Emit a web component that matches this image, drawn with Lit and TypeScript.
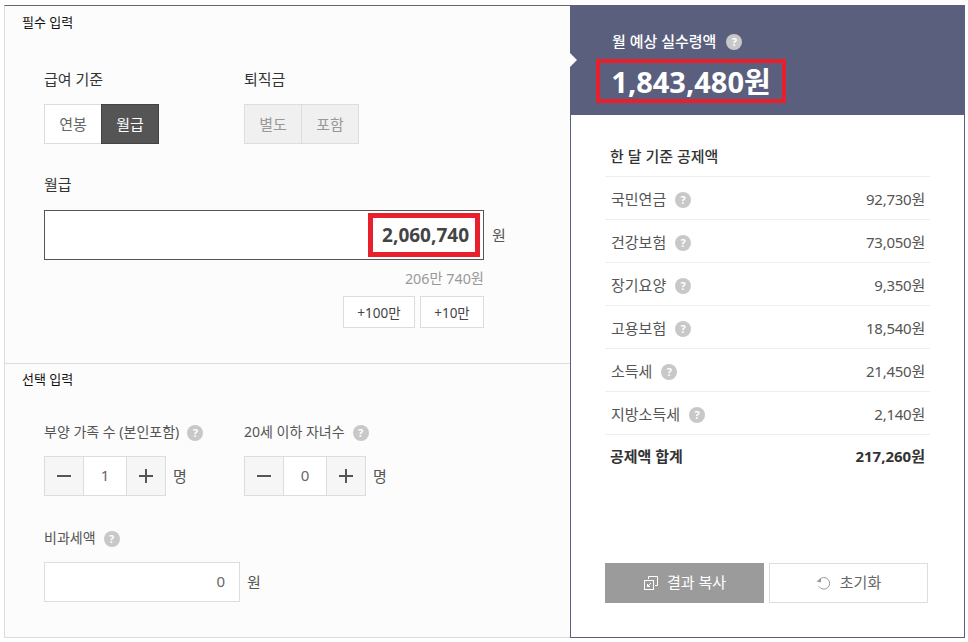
import { LitElement, html, css } from "lit";
import { customElement } from "lit/decorators.js";

const help = () => html`<span class="help">?</span>`;
const rows: [string, string][] = [
  ["국민연금", "92,730원"],
  ["건강보험", "73,050원"],
  ["장기요양", "9,350원"],
  ["고용보험", "18,540원"],
  ["소득세", "21,450원"],
  ["지방소득세", "2,140원"],
];

@customElement("app-root")
export class AppRoot extends LitElement {
  static styles = css`
    :host {
      display: block;
      width: 968px;
      height: 642px;
      box-sizing: border-box;
      padding: 5px 3px 4px 4px;
      background: #fff;
      font-family: "Noto Sans", "Noto Sans CJK KR", sans-serif;
      font-size: 15px;
      color: #444;
    }
    * { box-sizing: border-box; }
    .wrap { display: flex; height: 633px; }
    .left {
      width: 566px;
      display: flex;
      flex-direction: column;
      background: #fcfcfc;
      border-top: 1px solid #666;
      border-left: 1px solid #ddd;
      border-bottom: 1px solid #ddd;
    }
    .sec1 { height: 358px; border-bottom: 1px solid #ddd; flex: none; }
    .sec2 { flex: 1; }
    .title { font-size: 13px; color: #111; line-height: 18px; padding: 7px 0 0 17px; height: 25px; }
    .sec2 .title { padding-top: 6px; }
    .lbl { font-size: 15px; line-height: 20px; color: #333; display: flex; align-items: center; }
    .sec2 .lbl { color: #555; font-size: 14px; }
    .help {
      display: inline-flex;
      align-items: center;
      justify-content: center;
      width: 16px;
      height: 16px;
      margin-top: 2px;
      border-radius: 50%;
      background: #c8c8c8;
      color: #fff;
      font-size: 11px;
      font-weight: 700;
      margin-left: 8px;
      flex: none;
    }
    .cols { display: flex; padding: 38px 0 0 39px; }
    .cols > div { width: 200px; }
    .seg { display: flex; margin-top: 15px; }
    .seg span {
      width: 58px;
      height: 40px;
      display: flex;
      align-items: center;
      justify-content: center;
      padding-bottom: 1px;
      border: 1px solid #ddd;
      background: #fff;
      color: #666;
    }
    .seg span + span { margin-left: -1px; }
    .seg span.on { background: #555; border-color: #444; color: #fff; }
    .seg.dis span { background: #f0f0f0; color: #999; }
    .salary { padding: 30px 0 0 39px; }
    .inrow { display: flex; align-items: center; margin-top: 16px; width: 480px; }
    .bigin {
      width: 440px;
      height: 50px;
      border: 1px solid #555;
      background: #fff;
      display: flex;
      justify-content: flex-end;
      align-items: center;
      padding: 0 3px 0 0;
    }
    .redn {
      width: 112px;
      height: 44px;
      border: 5px solid #e8202c;
      display: flex;
      align-items: center;
      justify-content: flex-end;
      padding-right: 6px;
      font-size: 19px;
      font-weight: 700;
      color: #444;
    }
    .unit { margin-left: 8px; padding-bottom: 1px; color: #555; font-size: 15px; }
    .stepwrap .unit { margin-left: 7px; }
    .hint { width: 440px; text-align: right; font-size: 14.3px; color: #999; margin-top: 9px; line-height: 20px; }
    .adds { width: 440px; display: flex; justify-content: flex-end; gap: 5px; margin-top: 7px; }
    .adds span {
      height: 32px;
      border: 1px solid #ddd;
      background: #fff;
      display: flex;
      align-items: center;
      justify-content: center;
      padding-bottom: 1px;
      font-size: 13.5px;
      color: #444;
    }
    .adds .a { width: 72px; }
    .adds .b { width: 64px; }
    .sec2 .cols { padding-top: 33px; }
    .stepwrap { display: flex; align-items: center; margin-top: 14px; }
    .step { display: flex; width: 122px; height: 40px; border: 1px solid #ddd; background: #fff; }
    .step i { width: 38px; background: #f6f6f6; display: flex; align-items: center; justify-content: center; }
    .step b { flex: 1; border-left: 1px solid #ddd; border-right: 1px solid #ddd; display: flex; align-items: center; justify-content: center; padding-bottom: 2px; font-weight: 400; color: #666; }
    .step svg { width: 16px; height: 16px; display: block; }
    .nontax { padding: 32px 0 0 39px; }
    .smallin {
      width: 196px;
      height: 40px;
      border: 1px solid #ddd;
      background: #fff;
      display: flex;
      align-items: center;
      justify-content: flex-end;
      padding: 0 14px 2px 0;
      color: #666;
    }
    .nontax .unit { margin-left: 7px; }
    .nontax .inrow { margin-top: 14px; }

    .right {
      flex: 1;
      display: flex;
      flex-direction: column;
      background: #fff;
      border-left: 1px solid #5b5f7e;
      border-right: 1px solid #5b5f7e;
      border-bottom: 1px solid #5b5f7e;
    }
    .head { position: relative; height: 110px; background: #5b5f7e; color: #fff; padding: 26px 0 0 25px; flex: none; }
    .head::before {
      content: "";
      position: absolute;
      left: -1px;
      top: 48px;
      border-left: 7px solid #fcfcfc;
      border-top: 7px solid transparent;
      border-bottom: 7px solid transparent;
    }
    .ht { display: flex; align-items: center; font-size: 15px; font-weight: 500; line-height: 20px; margin-left: 16px; }
    .ht .help { margin-left: 10px; }
    .amount {
      width: 190px;
      height: 44px;
      margin-top: 8px;
      border: 4px solid #e8202c;
      display: flex;
      align-items: center;
      justify-content: center;
      padding-bottom: 3px;
      font-size: 29px;
      font-weight: 700;
      letter-spacing: 0;
      white-space: nowrap;
    }
    .body { flex: 1; padding: 30px 0 0 34px; display: flex; flex-direction: column; }
    .bt { font-size: 15px; font-weight: 500; color: #333; line-height: 22px; margin-left: 5px; height: 31px; }
    .row {
      width: 325px;
      height: 43px;
      border-top: 1px solid #eee;
      display: flex;
      align-items: center;
      justify-content: space-between;
      padding: 1px 5px 0 6px;
      color: #555;
    }
    .row .n { display: flex; align-items: center; }
    .row .help { margin-left: 9px; }
    .row .v { letter-spacing: -0.25px; }
    .row.total { color: #333; font-weight: 700; padding: 0 5px 1px 5px; }
    .btns { display: flex; gap: 5px; margin-top: auto; margin-bottom: 34px; }
    .btn {
      width: 159px;
      height: 40px;
      display: flex;
      align-items: center;
      justify-content: center;
      gap: 8px;
      padding-bottom: 3px;
    }
    .btn svg { width: 16px; height: 16px; display: block; margin-top: 3px; }
    .btn.copy { background: #9b9b9b; color: #fff; }
    .btn.reset { border: 1px solid #ddd; color: #666; background: #fff; }
  `;

  minus() {
    return html`<svg viewBox="0 0 16 16"><path d="M1 8h14" stroke="#555" stroke-width="2"/></svg>`;
  }
  plus() {
    return html`<svg viewBox="0 0 16 16"><path d="M1 8h14M8 1v14" stroke="#555" stroke-width="2"/></svg>`;
  }

  render() {
    return html`
      <div class="wrap">
        <div class="left">
          <div class="sec1">
            <div class="title">필수 입력</div>
            <div class="cols">
              <div>
                <div class="lbl">급여 기준</div>
                <div class="seg"><span>연봉</span><span class="on">월급</span></div>
              </div>
              <div>
                <div class="lbl">퇴직금</div>
                <div class="seg dis"><span>별도</span><span>포함</span></div>
              </div>
            </div>
            <div class="salary">
              <div class="lbl">월급</div>
              <div class="inrow">
                <div class="bigin"><div class="redn">2,060,740</div></div>
                <span class="unit">원</span>
              </div>
              <div class="hint">206만 740원</div>
              <div class="adds"><span class="a">+100만</span><span class="b">+10만</span></div>
            </div>
          </div>
          <div class="sec2">
            <div class="title">선택 입력</div>
            <div class="cols">
              <div>
                <div class="lbl">부양 가족 수 (본인포함) ${help()}</div>
                <div class="stepwrap">
                  <div class="step"><i>${this.minus()}</i><b>1</b><i>${this.plus()}</i></div>
                  <span class="unit">명</span>
                </div>
              </div>
              <div>
                <div class="lbl">20세 이하 자녀수 ${help()}</div>
                <div class="stepwrap">
                  <div class="step"><i>${this.minus()}</i><b>0</b><i>${this.plus()}</i></div>
                  <span class="unit">명</span>
                </div>
              </div>
            </div>
            <div class="nontax">
              <div class="lbl">비과세액 ${help()}</div>
              <div class="inrow"><div class="smallin">0</div><span class="unit">원</span></div>
            </div>
          </div>
        </div>
        <div class="right">
          <div class="head">
            <div class="ht">월 예상 실수령액 ${help()}</div>
            <div class="amount">1,843,480원</div>
          </div>
          <div class="body">
            <div class="bt">한 달 기준 공제액</div>
            ${rows.map(
              ([n, v]) => html`<div class="row"><span class="n">${n} ${help()}</span><span class="v">${v}</span></div>`
            )}
            <div class="row total"><span>공제액 합계</span><span>217,260원</span></div>
            <div class="btns">
              <div class="btn copy">
                <svg viewBox="0 0 16 16" fill="none" stroke="#fff" stroke-width="1"><path d="M5.5 4V1.5h9v9H12"/><rect x="1.5" y="5.5" width="9" height="9"/><path d="M8 8l-3.5 3.5M4.5 9v2.5H7"/></svg>
                결과 복사
              </div>
              <div class="btn reset">
                <svg viewBox="0 0 16 16" fill="none" stroke="#999" stroke-width="1"><path d="M3.5 4.5A5.8 5.8 0 1 1 3 11.5"/><path d="M0.5 6.5l4.5 1V3z" fill="#999" stroke="none"/></svg>
                초기화
              </div>
            </div>
          </div>
        </div>
      </div>
    `;
  }
}
